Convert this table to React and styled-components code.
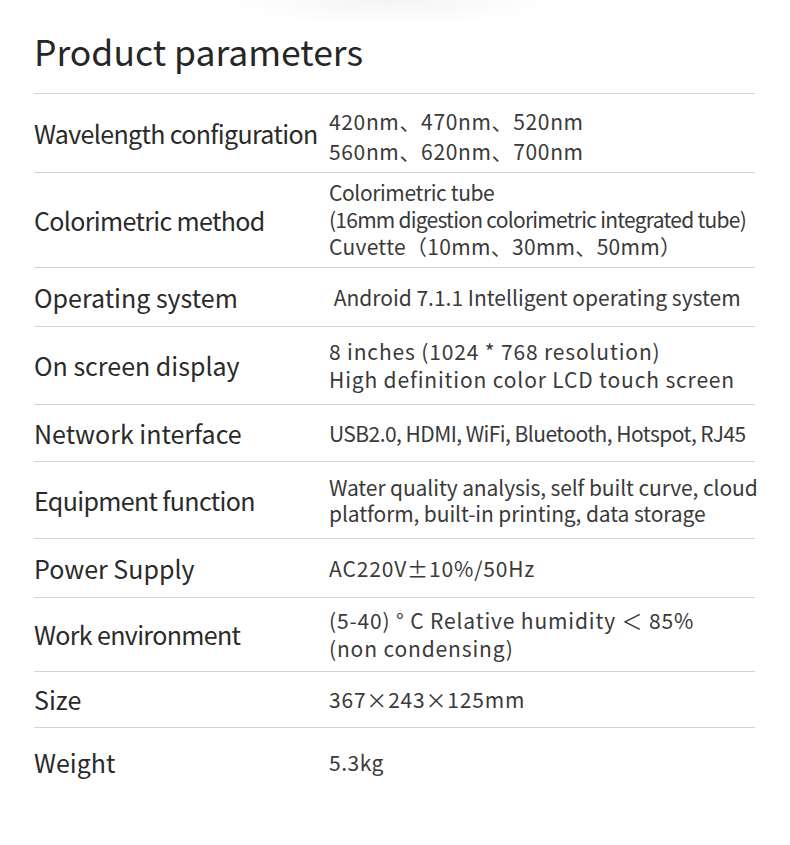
import React from 'react'
import styled, { createGlobalStyle } from 'styled-components'

const GlobalStyle = createGlobalStyle`
    body {
        margin: 0;
        background: #fff;
        font-family: "Noto Sans CJK SC", "Noto Sans", sans-serif;
        color: #2b2b2b;
    }
`

const Page = styled.div`
    width: 790px;
    height: 845px;
    padding: 0 35px 0 34px;
    box-sizing: border-box;
    background: radial-gradient(ellipse 170px 26px at 390px 0, rgba(0, 0, 0, 0.045), rgba(0, 0, 0, 0));
`

const Title = styled.h1`
    margin: 0;
    padding-top: 26px;
    height: 94px;
    box-sizing: border-box;
    font-size: 35.5px;
    font-weight: 400;
    line-height: 50px;
    color: #262626;
    border-bottom: 1px solid #d4d4d4;
`

const Row = styled.div`
    display: grid;
    grid-template-columns: 295px 1fr;
    align-items: center;
    height: ${props => props.h}px;
    border-bottom: ${props => props.last ? 'none' : '1px solid #d4d4d4'};
`

const Label = styled.div`
    font-size: 25px;
    letter-spacing: ${props => props.tight ? '-0.65px' : '0'};
    color: #2a2a2a;
    white-space: nowrap;
    margin-top: -1px;
`

const Value = styled.div`
    font-size: 21px;
    line-height: ${props => props.lh || 28}px;
    color: #3a3a3a;
    padding-top: ${props => props.shift || 0}px;
    margin-top: -1px;
    white-space: nowrap;
`

const Line = styled.div`
    letter-spacing: ${props => props.spacing || 0}px;
`

const rows = [
    { label: 'Wavelength configuration', tight: true, h: 78, shift: 6, lh: 30, spacing: 0.65,
        lines: ['420nm、470nm、520nm', '560nm、620nm、700nm'] },
    { label: 'Colorimetric method', tight: true, h: 94, lh: 27,
        lines: [['Colorimetric tube', -0.4], ['(16mm digestion colorimetric integrated tube)', -0.75], ['Cuvette（10mm、30mm、50mm）', 0.3]] },
    { label: 'Operating system', h: 58, lines: ['\u00a0Android 7.1.1 Intelligent operating system'] },
    { label: 'On screen display', h: 77, spacing: 0.85,
        lines: ['8 inches (1024 * 768 resolution)', 'High definition color LCD touch screen'] },
    { label: 'Network interface', h: 56, spacing: -0.55, lines: ['USB2.0, HDMI, WiFi, Bluetooth, Hotspot, RJ45'] },
    { label: 'Equipment function', tight: true, h: 76, lh: 26, spacing: -0.1,
        lines: ['Water quality analysis, self built curve, cloud', 'platform, built-in printing, data storage'] },
    { label: 'Power Supply', h: 58, spacing: 0.85, lines: ['AC220V±10%/50Hz'] },
    { label: 'Work environment', tight: true, h: 73, spacing: 0.85,
        lines: ['(5-40) ° C Relative humidity ＜ 85%', '(non condensing)'] },
    { label: 'Size', h: 55, spacing: 0.8, lines: ['367×243×125mm'] },
    { label: 'Weight', h: 68, spacing: 0.5, lines: ['5.3kg'], last: true },
]

export default function App() {
    return (
        <Page>
            <GlobalStyle />
            <Title>Product parameters</Title>
            {rows.map(row => (
                <Row key={row.label} h={row.h} last={row.last}>
                    <Label tight={row.tight}>{row.label}</Label>
                    <Value lh={row.lh} shift={row.shift}>
                        {row.lines.map(line => {
                            const [text, spacing] = Array.isArray(line) ? line : [line, row.spacing]
                            return <Line key={text} spacing={spacing}>{text}</Line>
                        })}
                    </Value>
                </Row>
            ))}
        </Page>
    )
}
